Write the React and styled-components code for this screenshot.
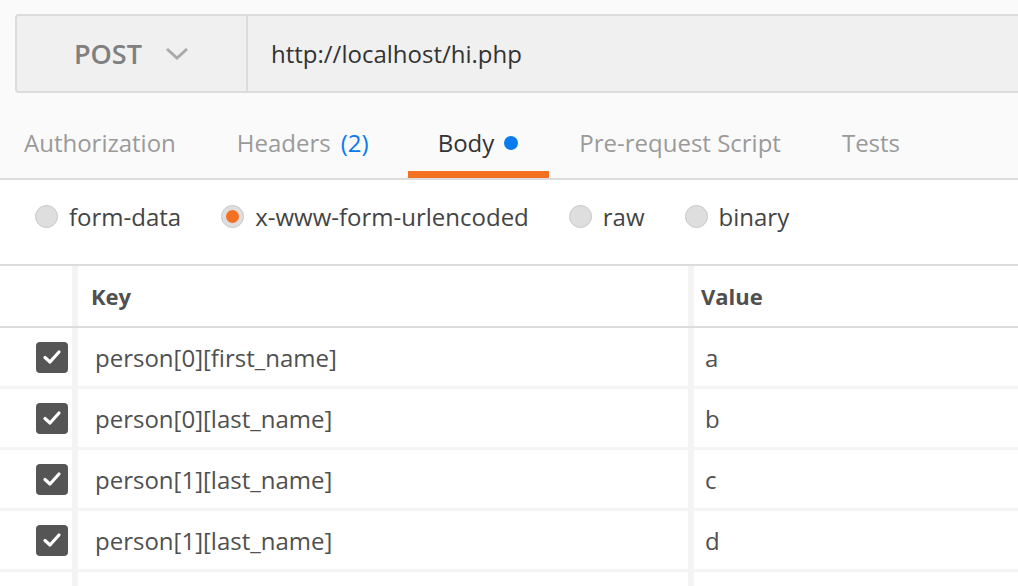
import React from 'react';
import styled, { createGlobalStyle } from 'styled-components';

const GlobalStyle = createGlobalStyle`
    html, body {
        margin: 0;
        padding: 0;
        background: #fafafa;
        overflow: hidden;
    }
    body {
        font-family: "Open Sans", "DejaVu Sans", sans-serif;
        color: #505050;
    }
`;

const Page = styled.div`
    width: 1018px;
    height: 586px;
    overflow: hidden;
    background: #fafafa;
`;

const RequestBar = styled.div`
    display: flex;
    box-sizing: border-box;
    height: 79px;
    margin: 14px -20px 0 15px;
    background: #f0f0f0;
    border: 2px solid #dcdcdc;
    border-right: none;
    border-radius: 4px 0 0 4px;
`;

const Method = styled.div`
    display: flex;
    align-items: center;
    box-sizing: border-box;
    width: 231px;
    padding-left: 57px;
    border-right: 2px solid #dcdcdc;
    font-size: 27px;
    font-weight: 600;
    color: #808080;
    gap: 23px;
`;

const Url = styled.div`
    display: flex;
    align-items: center;
    padding-left: 23px;
    font-size: 24px;
    color: #333;
`;

const TabBar = styled.div`
    display: flex;
    box-sizing: border-box;
    height: 87px;
    border-bottom: 2px solid #dcdcdc;
`;

const Tab = styled.div`
    display: flex;
    align-items: center;
    box-sizing: border-box;
    height: 85px;
    padding: 34px ${p => p.$extra ? 39 : 31}px 12px 30px;
    margin-left: ${p => p.$first ? '-6px' : '0'};
    font-size: 24px;
    line-height: 32px;
    color: ${p => p.$active ? '#333' : '#9a9a9a'};
    border-bottom: 7px solid ${p => p.$active ? '#f47023' : 'transparent'};
    white-space: nowrap;
`;

const Count = styled.span`
    color: #097bed;
    margin-left: 10px;
`;

const Dot = styled.span`
    display: inline-block;
    width: 14px;
    height: 14px;
    border-radius: 50%;
    background: #097bed;
    margin-left: 10px;
`;

const ModeRow = styled.div`
    display: flex;
    align-items: center;
    box-sizing: border-box;
    height: 86px;
    padding: 0 0 12px 35px;
    gap: 40px;
    background: #fff;
    border-bottom: 2px solid #dcdcdc;
`;

const Mode = styled.label`
    display: flex;
    align-items: center;
    gap: 11px;
    font-size: 24px;
    color: #444;
`;

const Radio = styled.span`
    position: relative;
    box-sizing: border-box;
    width: 23px;
    height: 23px;
    border-radius: 50%;
    background: #dedede;
    border: 1px solid #c8c8c8;

    &::after {
        content: '';
        display: ${p => p.$on ? 'block' : 'none'};
        position: absolute;
        left: 4px;
        top: 4px;
        width: 13px;
        height: 13px;
        border-radius: 50%;
        background: #f47023;
    }
`;

const Row = styled.div`
    display: grid;
    grid-template-columns: 72px 610px 1fr;
    column-gap: 6px;
    height: ${p => p.$head ? '62px' : '61px'};
    box-sizing: border-box;
    background: #f4f4f4;
    border-bottom: ${p => p.$head ? '2px solid #dcdcdc' : '3px solid #f4f4f4'};
`;

const Cell = styled.div`
    display: flex;
    align-items: center;
    background: #fff;
    padding-left: ${p => p.$pad || 0}px;
    font-size: ${p => p.$head ? '22px' : '24px'};
    font-weight: ${p => p.$head ? 700 : 400};
    color: #505050;
`;

const CheckCell = styled(Cell)`
    justify-content: flex-end;
    padding-right: 4px;
`;

const Checkbox = styled.span`
    display: flex;
    align-items: center;
    justify-content: center;
    width: 32px;
    height: 31px;
    border-radius: 4px;
    background: #555;
`;

const Chevron = () => (
    <svg width="24" height="14" viewBox="0 0 24 14">
        <path d="M2 2 L12 11 L22 2" fill="none" stroke="#aaa" strokeWidth="3" />
    </svg>
);

const Check = () => (
    <svg width="20" height="16" viewBox="0 0 20 16">
        <path d="M3 8.5 L8 13 L17 3" fill="none" stroke="#fff" strokeWidth="3.2" strokeLinecap="round" strokeLinejoin="round" />
    </svg>
);

const tabs = [
    { label: 'Authorization' },
    { label: 'Headers', count: '(2)', extra: true },
    { label: 'Body', active: true, dot: true },
    { label: 'Pre-request Script' },
    { label: 'Tests' },
];

const modes = [
    { label: 'form-data' },
    { label: 'x-www-form-urlencoded', on: true },
    { label: 'raw' },
    { label: 'binary' },
];

const params = [
    { key: 'person[0][first_name]', value: 'a' },
    { key: 'person[0][last_name]', value: 'b' },
    { key: 'person[1][last_name]', value: 'c' },
    { key: 'person[1][last_name]', value: 'd' },
];

export default function App() {
    return (
        <Page>
            <GlobalStyle />
            <RequestBar>
                <Method>
                    POST
                    <Chevron />
                </Method>
                <Url>http://localhost/hi.php</Url>
            </RequestBar>

            <TabBar>
                {tabs.map((t, i) => (
                    <Tab key={t.label} $first={i === 0} $active={t.active} $extra={t.extra}>
                        {t.label}
                        {t.count && <Count>{t.count}</Count>}
                        {t.dot && <Dot />}
                    </Tab>
                ))}
            </TabBar>

            <ModeRow>
                {modes.map(m => (
                    <Mode key={m.label}>
                        <Radio $on={m.on} />
                        {m.label}
                    </Mode>
                ))}
            </ModeRow>

            <Row $head>
                <Cell />
                <Cell $head $pad={13}>Key</Cell>
                <Cell $head $pad={7}>Value</Cell>
            </Row>
            {params.map((p, i) => (
                <Row key={i}>
                    <CheckCell>
                        <Checkbox><Check /></Checkbox>
                    </CheckCell>
                    <Cell $pad={17}>{p.key}</Cell>
                    <Cell $pad={11}>{p.value}</Cell>
                </Row>
            ))}
            <Row>
                <Cell />
                <Cell />
                <Cell />
            </Row>
        </Page>
    );
}
